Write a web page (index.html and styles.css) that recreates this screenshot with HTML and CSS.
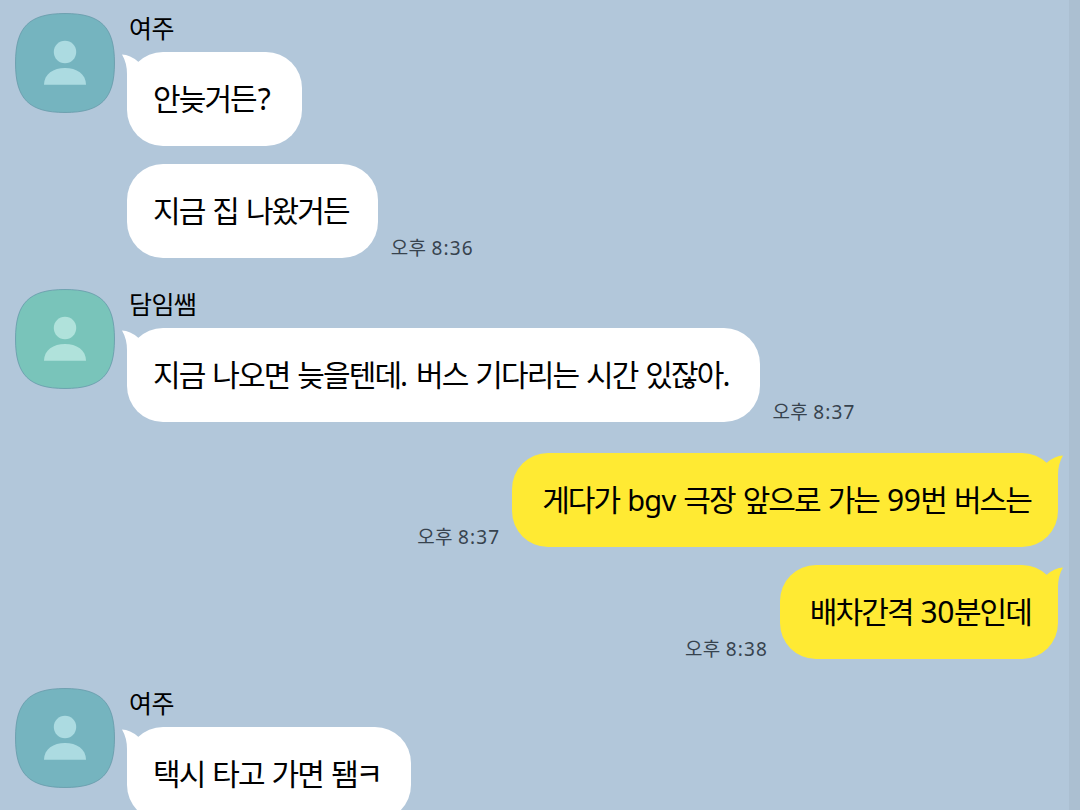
FILE: index.html
```
<!DOCTYPE html>
<html lang="ko">
<head>
  <meta charset="UTF-8" />
  <meta name="viewport" content="width=device-width, initial-scale=1.0"/>
  <title>채팅</title>
  <link rel="stylesheet" href="styles.css">
</head>
<body>
  <svg class="defs" aria-hidden="true">
    <symbol id="person" viewBox="0 0 100 100">
      <path class="shape" d="M50 .5C86 .5 99.500 14 99.500 50S86 99.500 50 99.500.5 86 .5 50 14 .5 50 .5z"/>
      <circle class="figure" cx="50" cy="39" r="11.200"/>
      <path class="figure" d="M29 71.800C29 61 38.500 55 50 55s21 6 21 16.800z"/>
    </symbol>
    <symbol id="tail" viewBox="0 0 24 40">
      <path d="M0 2.500Q8 2.500 16.500 10L24 6V40H5V22Q5 11 0 2.500z"/>
    </symbol>
  </svg>

  <main class="chat">
    <section class="group">
      <svg class="avatar blue"><use href="#person"/></svg>
      <div class="messages">
        <h2 class="name">여주</h2>
        <div class="row">
          <p class="bubble"><svg class="tail"><use href="#tail"/></svg>안늦거든<span class="mark">?</span></p>
        </div>
        <div class="row">
          <p class="bubble">지금 집 나왔거든</p>
          <time>오후 <span>8:36</span></time>
        </div>
      </div>
    </section>

    <section class="group">
      <svg class="avatar green"><use href="#person"/></svg>
      <div class="messages">
        <h2 class="name">담임쌤</h2>
        <div class="row">
          <p class="bubble"><svg class="tail"><use href="#tail"/></svg>지금 나오면 늦을텐데<span>.</span> 버스 기다리는 시간 있잖아<span>.</span></p>
          <time>오후 <span>8:37</span></time>
        </div>
      </div>
    </section>

    <section class="group mine">
      <div class="messages">
        <div class="row">
          <time>오후 <span>8:37</span></time>
          <p class="bubble"><svg class="tail"><use href="#tail"/></svg>게다가 <span class="latin">bgv</span> 극장 앞으로 가는 <span class="digits">99</span>번 버스는</p>
        </div>
        <div class="row">
          <time>오후 <span>8:38</span></time>
          <p class="bubble"><svg class="tail"><use href="#tail"/></svg>배차간격 <span class="digits">30</span>분인데</p>
        </div>
      </div>
    </section>

    <section class="group">
      <svg class="avatar blue"><use href="#person"/></svg>
      <div class="messages">
        <h2 class="name">여주</h2>
        <div class="row">
          <p class="bubble"><svg class="tail"><use href="#tail"/></svg>택시 타고 가면 됌<span class="jamo">ㅋ</span></p>
        </div>
      </div>
    </section>
  </main>
</body>
</html>
```
FILE: styles.css
```
* {
  box-sizing: border-box;
}
body {
  margin: 0;
  height: 810px;
  overflow: hidden;
  background-color: #b2c7da;
  font-family: "Noto Sans", "Noto Sans CJK KR", sans-serif;
  color: #000;
}
.defs {
  position: absolute;
  width: 0;
  height: 0;
}
.chat {
  display: flex;
  flex-direction: column;
  gap: 31px;
  height: 810px;
  padding: 13px 11px 0 15px;
  border-right: 11px solid #abbfd1;
  overflow: hidden;
}
.group {
  display: flex;
  flex: none;
  gap: 12px;
}
.avatar {
  flex: none;
  width: 100px;
  height: 100px;
}
.shape {
  stroke: #6499a8;
  stroke-width: 0.8;
}
.blue {
  fill: #75b4bf;
  color: #acdbe1;
}
.green {
  fill: #79c4ba;
  color: #b0e2db;
}
.figure {
  fill: currentColor;
}
.messages {
  display: flex;
  flex-direction: column;
  gap: 18px;
}
.name {
  height: 39px;
  margin: 0 0 -18px 2px;
  font-size: 25px;
  font-weight: 400;
  line-height: 30px;
  letter-spacing: -0.6px;
}
.row {
  display: flex;
  align-items: flex-end;
  gap: 13px;
}
.bubble {
  position: relative;
  height: 94px;
  margin: 0;
  padding: 0 29px 0 26px;
  border-radius: 36px;
  background-color: #fff;
  font-size: 30px;
  line-height: 93px;
  letter-spacing: -1.9px;
  word-spacing: 2px;
  white-space: nowrap;
}
.bubble span {
  letter-spacing: 0;
}
.bubble .mark {
  margin-left: 2px;
  letter-spacing: 2px;
}
.bubble .latin {
  font-size: 29px;
  letter-spacing: -0.7px;
}
.bubble .digits {
  letter-spacing: -0.5px;
}
.bubble .jamo {
  margin-left: -1px;
  letter-spacing: -0.9px;
}
/* Sprechblasenspitze */
.tail {
  position: absolute;
  top: 0;
  left: -5px;
  width: 24px;
  height: 40px;
  fill: #fff;
}
time {
  height: 22px;
  font-size: 19px;
  line-height: 24px;
  letter-spacing: 0.3px;
  color: #37434e;
  white-space: nowrap;
}
time span {
  letter-spacing: 1.1px;
}
.mine time {
  margin-right: -1px;
}

/* eigene Nachrichten */
.mine {
  justify-content: flex-end;
  margin-bottom: -2px;
}
.mine .row {
  justify-content: flex-end;
}
.mine .bubble {
  padding: 0 27px 0 30px;
  background-color: #ffea33;
}
.mine .tail {
  left: auto;
  right: -5px;
  fill: #ffea33;
  transform: scaleX(-1);
}
```
